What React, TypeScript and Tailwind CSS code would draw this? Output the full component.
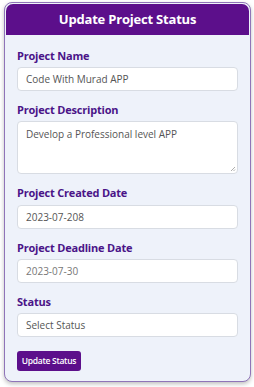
export default function App() {
  const font = { fontFamily: '"Open Sans", "Noto Sans", sans-serif' };
  return (
    <div className="min-h-screen bg-white pt-[2px] pl-[4px] pr-[3px]" style={font}>
      <div className="w-[247px] h-[380px] rounded-[8px] border border-[#8f74b8] bg-[#eef2fa] shadow-[0_2px_4px_rgba(0,0,0,0.25)] overflow-hidden">
        <div className="mx-[1px] mt-[1px] h-[31px] rounded-t-[7px] bg-[#5c0f8b] flex items-center justify-center">
          <h1 className="text-[13px] font-bold text-white tracking-[-0.2px]">Update Project Status</h1>
        </div>
        <form className="px-[12px] pt-[13px] flex flex-col">
          <label className="text-[11px] font-bold text-[#4a1488] leading-[15px] tracking-[-0.2px]">Project Name</label>
          <div className="mt-[4px] h-[24px] rounded-[4px] border border-[#d8dce3] bg-white flex items-center px-[8px] text-[10px] text-[#555]">Code With Murad APP</div>

          <label className="mt-[11px] text-[11px] font-bold text-[#4a1488] leading-[15px] tracking-[-0.2px]">Project Description</label>
          <div className="relative mt-[4px] h-[53px] rounded-[4px] border border-[#d8dce3] bg-white px-[8px] pt-[5px] text-[10px] text-[#555]">
            Develop a Professional level APP
            <svg className="absolute right-[1px] bottom-[1px]" width="6" height="6" viewBox="0 0 6 6">
              <path d="M5 1 L1 5 M5 3.5 L3.5 5" stroke="#999" strokeWidth="0.8" />
            </svg>
          </div>

          <label className="mt-[11px] text-[11px] font-bold text-[#4a1488] leading-[15px] tracking-[-0.2px]">Project Created Date</label>
          <div className="mt-[5px] h-[24px] rounded-[4px] border border-[#d8dce3] bg-white flex items-center px-[8px] text-[10px] text-[#555]">2023-07-208</div>

          <label className="mt-[11px] text-[11px] font-bold text-[#4a1488] leading-[15px] tracking-[-0.2px]">Project Deadline Date</label>
          <div className="mt-[4px] h-[24px] rounded-[4px] border border-[#d8dce3] bg-white flex items-center px-[8px] text-[10px] text-[#777]">2023-07-30</div>

          <label className="mt-[11px] text-[11px] font-bold text-[#4a1488] leading-[15px] tracking-[-0.2px]">Status</label>
          <div className="mt-[4px] h-[24px] rounded-[4px] border border-[#d8dce3] bg-white flex items-center px-[8px] text-[10px] text-[#555]">Select Status</div>

          <button type="button" className="mt-[14px] self-start h-[20px] w-[64px] rounded-[3px] bg-[#5c0f8b] text-white text-[8.5px] font-semibold tracking-[-0.3px] leading-none">Update Status</button>
        </form>
      </div>
    </div>
  );
}
